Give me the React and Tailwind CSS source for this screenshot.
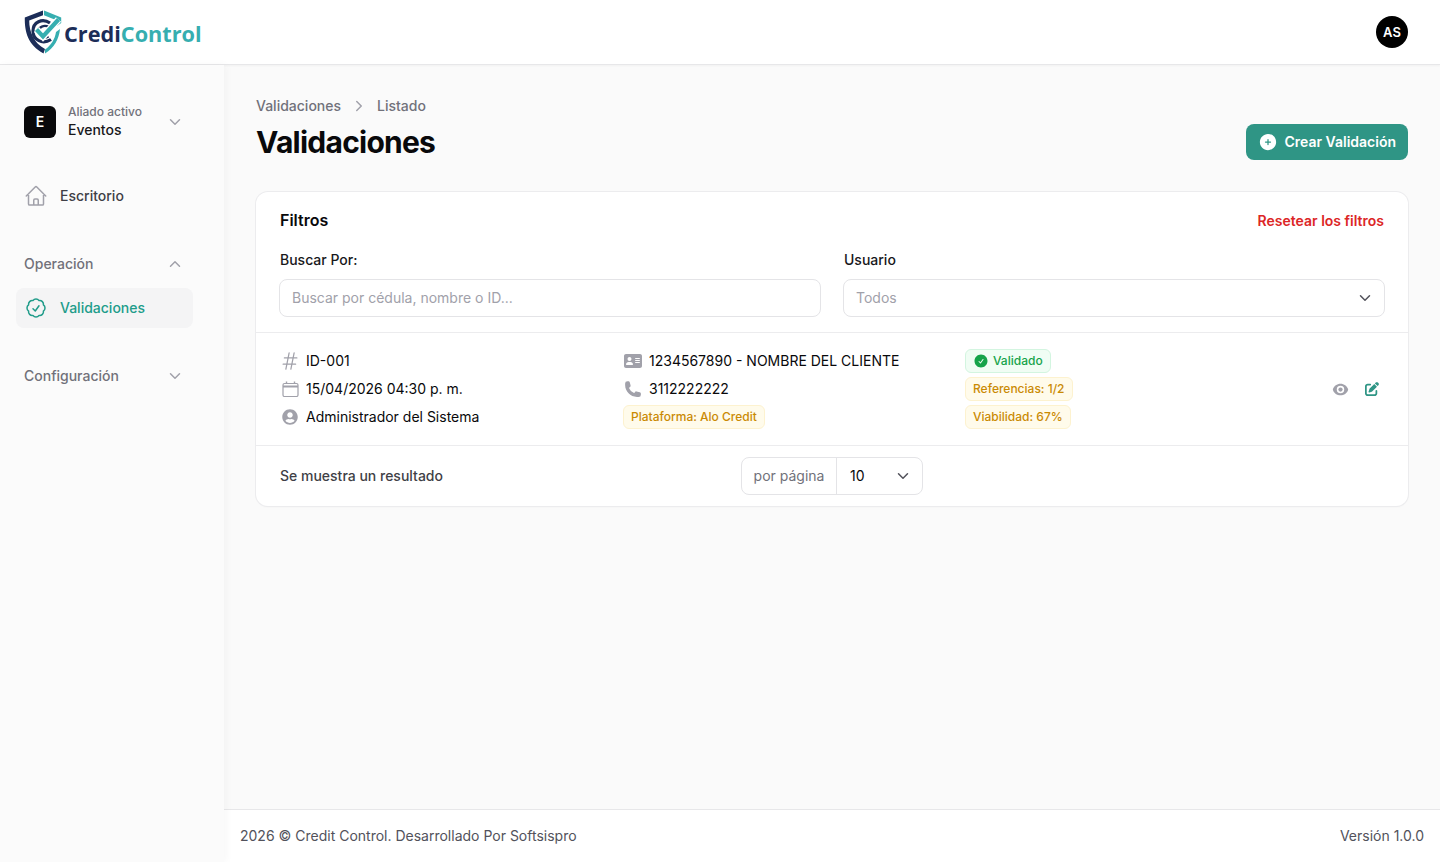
import React from 'react';
import { HiOutlineHome, HiOutlineCheckBadge, HiOutlineHashtag, HiCheckCircle, HiPlusCircle, HiEye, HiPhone } from 'react-icons/hi2';
import { FaAddressCard, FaPenToSquare } from 'react-icons/fa6';
import { FaUserCircle } from 'react-icons/fa';
import { FiChevronDown, FiChevronUp, FiChevronRight } from 'react-icons/fi';

const Logo = () => (
  <div className="flex items-center">
    <svg width="38" height="44" viewBox="0 0 38 44" fill="none">
      <path d="M19 0.5 L0.8 7.5 C0.5 22 4 35 19.5 43.5 L21 39 C10 33 5.2 22 5.2 10.5 L19 5.2 Z" fill="#1c2d58" />
      <path d="M20 0.5 L37.2 7.5 L37.2 13 L33 16 L33 10.5 L20 5.2 Z" fill="#36aeb0" />
      <path d="M36 19 C35 29 30 38 21 43.5 L21 39.5 C27 35.5 31 29 32 22 Z" fill="#36aeb0" />
      <path d="M26 13 C18 7.5 9 12.5 9 21 C9 30 18.5 35 27 29.5" stroke="#1c2d58" strokeWidth="3.2" />
      <path d="M25 17 C20 14.5 14.5 17 14.5 21.5 C14.5 26.5 20 29 24.5 26.5" stroke="#1c2d58" strokeWidth="2.2" />
      <path d="M12.5 19.5 L19 26.5 L34.5 9.5" stroke="#ffffff" strokeWidth="7" />
      <path d="M12.5 19.5 L19 26.5 L34.5 9.5" stroke="#36aeb0" strokeWidth="4.2" />
    </svg>
    <span className="font-['Open_Sans',sans-serif] font-bold text-[21.7px] leading-none text-[#1c2d58] ml-[2px] mt-[3px]">
      Credi<span className="text-[#36aeb0]">Control</span>
    </span>
  </div>
);

const Badge = ({ children, green }) => (
  <span
    className={`inline-flex items-center gap-1 h-6 pl-[7px] pr-[7px] rounded-md border text-xs font-medium ${
      green
        ? 'bg-[#f0fdf4] border-[#d3f5e0] text-[#16a34a]'
        : 'bg-[#fffbeb] border-[#fdf2cf] text-[#ca8a04]'
    }`}
  >
    {children}
  </span>
);

const InfoRow = ({ icon, children }) => (
  <div className="flex items-center gap-[6px] h-7">
    <span className="w-5 flex justify-center text-[#a1a1aa]">{icon}</span>
    <span>{children}</span>
  </div>
);

const CalendarIcon = () => (
  <svg width="17" height="16" viewBox="0 0 17 16" fill="none" stroke="currentColor">
    <rect x="1" y="2.5" width="15" height="13" rx="1.5" strokeWidth="1.2" />
    <path d="M1 5.5 H16" strokeWidth="2" />
    <path d="M4.5 0.5 V3 M12.5 0.5 V3" strokeWidth="1.4" />
  </svg>
);

export default function App() {
  return (
    <div className="h-[862px] flex flex-col bg-[#fafafa] text-[#09090b] font-['Inter',sans-serif] text-sm antialiased overflow-hidden">
      {/* Topbar */}
      <header className="h-[65px] shrink-0 bg-white border-b border-[#e7e7e9] shadow-[0_1px_2px_rgba(0,0,0,0.04)] flex items-center justify-between pl-6 pr-8">
        <Logo />
        <div className="w-8 h-8 rounded-full bg-black text-white text-[13px] font-semibold flex items-center justify-center">AS</div>
      </header>

      <div className="flex-1 flex min-h-0">
        {/* Sidebar */}
        <aside className="relative z-10 w-[224px] shrink-0 bg-[#fbfbfb] shadow-[2px_0_8px_rgba(0,0,0,0.035)] pt-[41px] pl-4 pr-[31px] font-medium">
          <div className="flex items-center pl-2 pr-[9px] h-8">
            <div className="w-8 h-8 rounded-md bg-[#09090b] text-white text-sm font-semibold flex items-center justify-center">E</div>
            <div className="ml-3 flex-1">
              <div className="text-xs leading-4 text-[#71717a]">Aliado activo</div>
              <div className="leading-5 text-[#18181b]">Eventos</div>
            </div>
            <FiChevronDown className="text-[#a1a1aa] w-[18px] h-[18px]" />
          </div>

          <div className="flex items-center gap-3 pl-2 h-10 mt-[38px] text-[#3f3f46]">
            <HiOutlineHome className="w-6 h-6 text-[#a1a1aa]" />
            <span>Escritorio</span>
          </div>

          <div className="flex items-center justify-between pl-2 pr-[9px] h-5 mt-[38px] text-[#71717a]">
            <span>Operación</span>
            <FiChevronUp className="text-[#a1a1aa] w-[18px] h-[18px]" />
          </div>
          <div className="flex items-center gap-3 pl-2 h-10 mt-[14px] rounded-lg bg-[#f4f4f5] text-[#219c8a]">
            <HiOutlineCheckBadge className="w-6 h-6" />
            <span>Validaciones</span>
          </div>

          <div className="flex items-center justify-between pl-2 pr-[9px] h-5 mt-[38px] text-[#71717a]">
            <span>Configuración</span>
            <FiChevronDown className="text-[#a1a1aa] w-[18px] h-[18px]" />
          </div>
        </aside>

        {/* Main Content */}
        <div className="flex-1 flex flex-col min-w-0">
          <main className="flex-1 px-8 pt-[31px]">
            <div className="flex items-center gap-[9px] h-5 text-[#71717a] font-medium">
              <span>Validaciones</span>
              <FiChevronRight className="w-[18px] h-[18px] text-[#a1a1aa]" />
              <span>Listado</span>
            </div>
            <div className="flex items-center justify-between mt-2">
              <h1 className="text-3xl leading-9 font-bold tracking-tight text-[#09090b]">Validaciones</h1>
              <button className="flex items-center gap-[6px] h-9 px-3 rounded-lg bg-[#2f9585] text-white font-semibold">
                <HiPlusCircle className="w-5 h-5" />
                Crear Validación
              </button>
            </div>

            <section className="mt-8 bg-white rounded-xl ring-1 ring-[#ececee] shadow-[0_1px_2px_rgba(0,0,0,0.05)]">
              <div className="px-6 pt-[18px] pb-[15px]">
                <div className="flex items-center justify-between h-5">
                  <h2 className="text-base font-semibold">Filtros</h2>
                  <button className="mt-[2px] font-semibold text-[#dc2626]">Resetear los filtros</button>
                </div>
                <div className="grid grid-cols-2 gap-[22px] mt-5 -mx-px">
                  <div>
                    <label className="block pl-px leading-5 font-medium text-[#18181b]">Buscar Por:</label>
                    <div className="mt-[9px] h-[38px] rounded-lg border border-[#e4e4e7] flex items-center px-3 text-[#a1a1aa]">
                      Buscar por cédula, nombre o ID...
                    </div>
                  </div>
                  <div>
                    <label className="block pl-px leading-5 font-medium text-[#18181b]">Usuario</label>
                    <div className="mt-[9px] h-[38px] rounded-lg border border-[#e4e4e7] flex items-center justify-between pl-3 pr-[10px] text-[#a1a1aa]">
                      Todos
                      <FiChevronDown className="w-[18px] h-[18px] text-[#52525b]" />
                    </div>
                  </div>
                </div>
              </div>

              {/* Row */}
              <div className="border-t border-[#ececee] flex items-center pl-6 pr-[29px] py-[14px] leading-5">
                <div className="w-[343px] shrink-0">
                  <InfoRow icon={<HiOutlineHashtag className="w-5 h-5" />}>ID-001</InfoRow>
                  <InfoRow icon={<CalendarIcon />}>15/04/2026 04:30 p. m.</InfoRow>
                  <InfoRow icon={<FaUserCircle className="w-4 h-4" />}>Administrador del Sistema</InfoRow>
                </div>
                <div className="w-[342px] shrink-0">
                  <InfoRow icon={<FaAddressCard className="w-[18px] h-4" />}>1234567890 - NOMBRE DEL CLIENTE</InfoRow>
                  <InfoRow icon={<HiPhone className="w-[18px] h-[18px]" />}>3112222222</InfoRow>
                  <div className="h-7 flex items-center"><Badge>Plataforma: Alo Credit</Badge></div>
                </div>
                <div className="flex-1">
                  <div className="h-7 flex items-center">
                    <Badge green><HiCheckCircle className="w-4 h-4" />Validado</Badge>
                  </div>
                  <div className="h-7 flex items-center"><Badge>Referencias: 1/2</Badge></div>
                  <div className="h-7 flex items-center"><Badge>Viabilidad: 67%</Badge></div>
                </div>
                <div className="flex items-center gap-4">
                  <HiEye className="w-[17px] h-[17px] text-[#a1a1aa]" />
                  <FaPenToSquare className="w-[14px] h-[14px] text-[#2f9585]" />
                </div>
              </div>

              {/* Pagination */}
              <div className="border-t border-[#ececee] h-[61px] flex items-center px-6 relative">
                <span className="font-medium text-[#3f3f46]">Se muestra un resultado</span>
                <div className="absolute left-[485px] top-[11px] h-[38px] w-[182px] rounded-lg border border-[#e4e4e7] flex items-center">
                  <span className="w-[95px] h-full flex items-center justify-center border-r border-[#e4e4e7] text-[#71717a]">por página</span>
                  <span className="pl-[13px] flex-1">10</span>
                  <FiChevronDown className="w-[18px] h-[18px] text-[#52525b] mr-[10px]" />
                </div>
              </div>
            </section>
          </main>

          <footer className="h-[53px] shrink-0 bg-white border-t border-[#e7e7e9] flex items-center justify-between px-4 text-[#52525b]">
            <span>2026 © Credit Control. Desarrollado Por Softsispro</span>
            <span>Versión 1.0.0</span>
          </footer>
        </div>
      </div>
    </div>
  );
}
